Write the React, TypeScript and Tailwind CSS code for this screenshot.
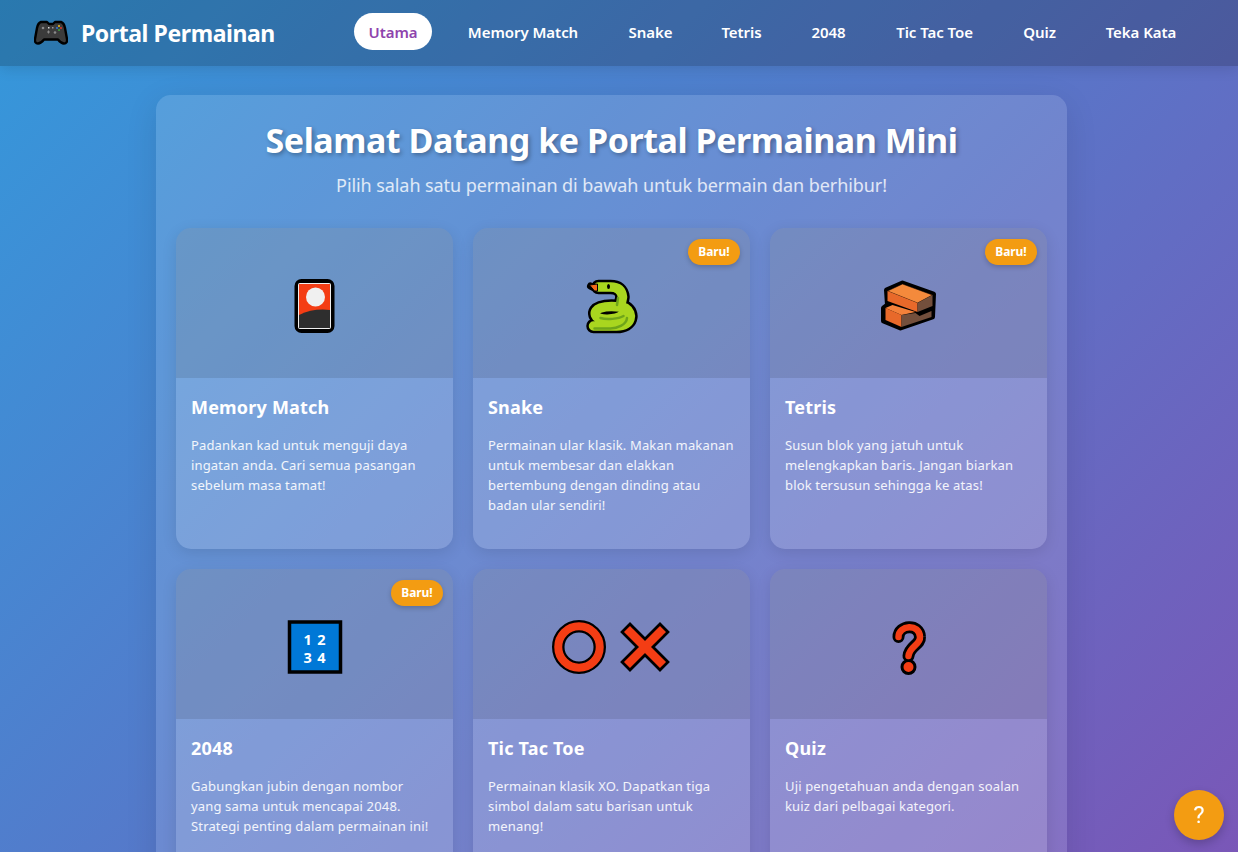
const ff = "[font-family:'Noto_Sans',sans-serif]"

const Controller = () => (
    <svg width="34" height="26" viewBox="21 11 34 26">
        <path d="M28 13 L34 13 L36 15 L40 15 L42 13 L48 13 Q51 14 52 19 L54 30 Q54.500 34.500 51 34.500 Q48 34.500 45 30.500 L31 30.500 Q28 34.500 25 34.500 Q21.500 34.500 22 30 L24 19 Q25 14 28 13 Z" fill="#3b3b3b" stroke="#000" strokeWidth="2.400" strokeLinejoin="round" />
        <circle cx="30" cy="19" r="1.300" fill="#8a8a8a" />
        <rect x="35" y="18" width="1.500" height="1.500" fill="#ddd" />
        <rect x="39" y="18" width="1.500" height="1.500" fill="#999" />
        <circle cx="46" cy="17" r="1" fill="#f2c21b" />
        <circle cx="44" cy="19" r="1" fill="#2a7de1" />
        <circle cx="48" cy="19" r="1" fill="#e0392b" />
        <circle cx="46" cy="21" r="1" fill="#3ca93c" />
        <path d="M34 23 h3 M35.500 21.500 v3" stroke="#8a8a8a" strokeWidth="1" />
        <circle cx="42" cy="23.500" r="1.300" fill="#8a8a8a" />
    </svg>
)

const Card = () => (
    <svg width="90" height="80" viewBox="-0.5 -2 90 80">
        <rect x="26" y="16" width="36" height="50" rx="5" fill="#000" stroke="#000" strokeWidth="4" />
        <rect x="27.500" y="18" width="33" height="46" rx="2" fill="#f0f0f0" />
        <rect x="28.500" y="19" width="31" height="44" fill="#f43d14" />
        <circle cx="45" cy="32" r="9.500" fill="#f0f0f0" />
        <path d="M28.500 50 Q43 43 59.500 45 V63 H28.500 Z" fill="#2e2e2e" />
    </svg>
)

const Snake = () => (
    <svg width="90" height="80" viewBox="-3.500 -2 90 80">
        <path d="M20 21 L26 24" stroke="#000" strokeWidth="7" strokeLinecap="round" />
        <g fill="none" strokeLinecap="round" strokeLinejoin="round">
            <path d="M28 22 H40 Q51 22 52 32 L50 42 C32 40 23 44 25 50 C27 56 46 55 52 50 M55 43 C63 48 62 61 46 61 L23 61" stroke="#000" strokeWidth="14.500" />
            <path d="M28 22 H40 Q51 22 52 32 L50 42 C32 40 23 44 25 50 C27 56 46 55 52 50 M55 43 C63 48 62 61 46 61 L23 61" stroke="#a9d61f" strokeWidth="9.500" />
            <path d="M47.500 33 L46.500 40 M30 53 C36 55 48 54 53 51 M56.500 53 C56 60 46 63.500 40 63.500 L24 63.500" stroke="#6fa51a" strokeWidth="2.500" />
        </g>
        <path d="M19 20 L27 19 L27 26 L24 26 Z" fill="#f26a1b" stroke="#000" strokeWidth="1" />
        <ellipse cx="38" cy="21.500" rx="1.500" ry="2.500" fill="#000" />
    </svg>
)

const Bricks = () => (
    <svg width="90" height="80" viewBox="-1.500 -2 90 80" strokeLinejoin="round">
        <path d="M18 43 L22 40 L21 25 L37 18 L68 29 L67 52 L35 63 L18 56 Z" fill="#000" stroke="#000" strokeWidth="5" />
        <path d="M20 43 L27 40 L50 47 L36 50 Z" fill="#f4813a" />
        <path d="M20 43 L36 50 V62 L20 55 Z" fill="#e8692a" />
        <path d="M36 50 L50 48 L54 51 L66 46 V52 L36 62 Z" fill="#734f3c" />
        <path d="M22 26 L37 19 L67 30 L52 38 Z" fill="#f48a3c" stroke="#000" strokeWidth="0.500" />
        <path d="M22 26 L52 38 V47 L22 36 Z" fill="#e8692a" />
        <path d="M52 38 L67 30 V41 L52 47 Z" fill="#734f3c" />
    </svg>
)

const Numbers = () => (
    <svg width="90" height="80" viewBox="-0.500 -1 90 80" fontFamily="'Noto Sans', sans-serif" fontWeight="700" fontSize="14.500">
        <rect x="19" y="17" width="51" height="50" fill="#0078d7" stroke="#000" strokeWidth="3.500" />
        <text x="44.500" y="40" fill="#fff" textAnchor="middle" letterSpacing="0.8">1 2</text>
        <text x="44.500" y="58" fill="#fff" textAnchor="middle" letterSpacing="0.8">3 4</text>
    </svg>
)

const TicTac = () => (
    <svg width="140" height="80" viewBox="1.500 -1 140 80">
        <circle cx="38.500" cy="42" r="20.750" fill="none" stroke="#000" strokeWidth="12.500" />
        <circle cx="38.500" cy="42" r="20.750" fill="none" stroke="#f43d14" strokeWidth="8" />
        <path d="M89.500 27 L119.500 57 M119.500 27 L89.500 57" stroke="#000" strokeWidth="14" strokeLinecap="square" />
        <path d="M89.500 27 L119.500 57 M119.500 27 L89.500 57" stroke="#f43d14" strokeWidth="8.500" strokeLinecap="square" />
    </svg>
)

const Question = () => (
    <svg width="80" height="80" viewBox="-1.500 -1 80 80" fill="none" strokeLinecap="round" strokeLinejoin="round">
        <path d="M28 32 C28 20 49 18 49.500 32 C50 40 39 41 38 51" stroke="#000" strokeWidth="12" />
        <circle cx="38" cy="62" r="6.500" fill="#f43d14" stroke="#000" strokeWidth="3" />
        <path d="M28 32 C28 20 49 18 49.500 32 C50 40 39 41 38 51" stroke="#f43d14" strokeWidth="6.500" />
    </svg>
)

const games = [
    { title: 'Memory Match', desc: 'Padankan kad untuk menguji daya ingatan anda. Cari semua pasangan sebelum masa tamat!', icon: <Card /> },
    { title: 'Snake', desc: 'Permainan ular klasik. Makan makanan untuk membesar dan elakkan bertembung dengan dinding atau badan ular sendiri!', icon: <Snake />, baru: true },
    { title: 'Tetris', desc: 'Susun blok yang jatuh untuk melengkapkan baris. Jangan biarkan blok tersusun sehingga ke atas!', icon: <Bricks />, baru: true },
    { title: '2048', desc: <>Gabungkan jubin dengan nombor<br />yang sama untuk mencapai 2048.<br />Strategi penting dalam permainan ini!</>, icon: <Numbers />, baru: true },
    { title: 'Tic Tac Toe', desc: 'Permainan klasik XO. Dapatkan tiga simbol dalam satu barisan untuk menang!', icon: <TicTac /> },
    { title: 'Quiz', desc: 'Uji pengetahuan anda dengan soalan kuiz dari pelbagai kategori.', icon: <Question /> },
    { title: 'Teka Kata', desc: 'Teka perkataan tersembunyi sebelum peluang anda habis.', icon: <Question /> },
]

const links = [
    { label: 'Memory Match', w: 'w-[142px]' },
    { label: 'Snake', w: 'w-[73px]' },
    { label: 'Tetris', w: 'w-[69px]' },
    { label: '2048', w: 'w-[65px]' },
    { label: 'Tic Tac Toe', w: 'w-[107px]' },
    { label: 'Quiz', w: 'w-[63px]' },
    { label: 'Teka Kata', w: 'w-[100px]' },
]

const App = () => {
    return (
        <div className={`${ff} min-h-screen text-white bg-[linear-gradient(135deg,#3498db,#8e44ad)]`}>
            <header className="bg-black/20 shadow-[0_4px_12px_rgba(0,0,0,0.1)]">
                <div className="w-[1223px] h-[66px] pl-[34px] pr-8 flex items-center justify-between">
                    <div className="flex items-center gap-[13px]">
                        <Controller />
                        <span className="text-[23px] font-bold tracking-[-0.42px]">Portal Permainan</span>
                    </div>
                    <nav className="flex items-center gap-5 mb-[3px] text-[15px] font-semibold tracking-[-0.05px]">
                        <a className="w-[78px] h-[37px] pt-[2px] flex items-center justify-center rounded-[20px] bg-white text-[#8e44ad]">Utama</a>
                        {links.map((l) => (
                            <a key={l.label} className={`${l.w} h-[37px] pt-[2px] flex items-center justify-center whitespace-nowrap`}>{l.label}</a>
                        ))}
                    </nav>
                </div>
            </header>

            <div className="w-[1223px] pt-[29px] pb-[150px]">
                <main className="mx-auto w-[911px] p-5 rounded-[15px] bg-white/[0.13] shadow-[0_8px_32px_rgba(0,0,0,0.1)]">
                    <h1 className="text-center text-[34px] leading-[46px] mt-[2px] font-bold tracking-[-0.45px] [text-shadow:2px_2px_4px_rgba(0,0,0,0.3)]">Selamat Datang ke Portal Permainan Mini</h1>
                    <p className="text-center text-[18px] leading-[25px] mt-[10px] mb-[30px] text-white/80 tracking-[-0.08px]">Pilih salah satu permainan di bawah untuk bermain dan berhibur!</p>
                    <div className="grid grid-cols-3 gap-5">
                        {games.map((g) => (
                            <div key={g.title} className="relative h-[321px] rounded-[15px] overflow-hidden bg-white/15 shadow-[0_4px_15px_rgba(0,0,0,0.1)]">
                                <div className="h-[150px] flex items-center justify-center bg-black/10">{g.icon}</div>
                                {g.baru && (
                                    <span className="absolute top-[11px] right-[10px] h-[26px] px-[10.5px] flex items-center rounded-[20px] bg-[#f39c12] text-[12px] font-bold tracking-[-0.1px] shadow-[0_2px_5px_rgba(0,0,0,0.2)]">Baru!</span>
                                )}
                                <div className="px-[15px] pt-[15px]">
                                    <h3 className="text-[18px] leading-[29px] font-bold tracking-[0.2px]">{g.title}</h3>
                                    <p className="mt-[13px] text-[13px] leading-[20px] text-white/90 tracking-[0.15px]">{g.desc}</p>
                                </div>
                            </div>
                        ))}
                    </div>
                </main>
                <footer className="mt-10 text-center text-sm text-white/80">© 2025 Portal Permainan Mini</footer>
            </div>

            <button className="fixed right-[14px] bottom-[12px] w-[50px] h-[50px] rounded-full bg-[#f39c12] text-white text-[24px] [font-family:Roboto,sans-serif] shadow-[0_4px_10px_rgba(0,0,0,0.2)]">?</button>
        </div>
    )
}

export default App
